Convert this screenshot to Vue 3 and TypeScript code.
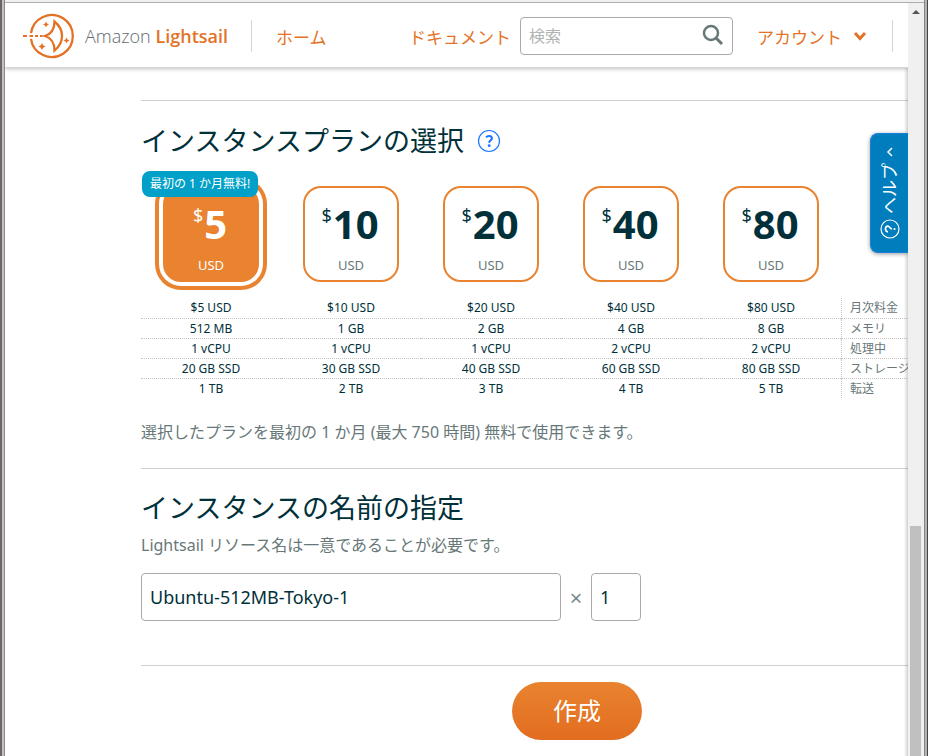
<script setup lang="ts">
import { ref } from 'vue'

interface Plan {
  price: number
  memory: string
  cpu: string
  storage: string
  transfer: string
}

const plans: Plan[] = [
  { price: 5, memory: '512 MB', cpu: '1 vCPU', storage: '20 GB SSD', transfer: '1 TB' },
  { price: 10, memory: '1 GB', cpu: '1 vCPU', storage: '30 GB SSD', transfer: '2 TB' },
  { price: 20, memory: '2 GB', cpu: '1 vCPU', storage: '40 GB SSD', transfer: '3 TB' },
  { price: 40, memory: '4 GB', cpu: '2 vCPU', storage: '60 GB SSD', transfer: '4 TB' },
  { price: 80, memory: '8 GB', cpu: '2 vCPU', storage: '80 GB SSD', transfer: '5 TB' },
]

const rows: { label: string; value: (p: Plan) => string }[] = [
  { label: '月次料金', value: (p) => `$${p.price} USD` },
  { label: 'メモリ', value: (p) => p.memory },
  { label: '処理中', value: (p) => p.cpu },
  { label: 'ストレージ', value: (p) => p.storage },
  { label: '転送', value: (p) => p.transfer },
]

const selected = ref(5)
const search = ref('')
const instanceName = ref('Ubuntu-512MB-Tokyo-1')
const count = ref('1')
</script>

<template>
  <div class="window">
    <div class="view">
      <header class="topbar">
        <a class="brand" href="#">
          <svg class="logo" viewBox="0 0 54 48" aria-hidden="true">
            <g fill="none" stroke="#e47226" stroke-width="2.3">
              <path d="M9 21.2A21 21 0 1 1 9 26.8" />
              <path d="M1 24H5M7.5 24H11M13 24H16M18 24H20.5M22 24H25" stroke-width="1.8" />
              <path d="M32.5 9.5C42.5 17.5 42.5 30.5 32.5 38.5C32.5 31 29.5 26 23 24C29.5 22 32.5 17 32.5 9.5Z" stroke-linejoin="miter" />
            </g>
            <g fill="#e47226">
              <path d="M24 9.5L25 11.5L27 12.5L25 13.5L24 15.5L23 13.5L21 12.5L23 11.5Z" />
              <path d="M20 31L21.2 33.3L23.5 34.5L21.2 35.7L20 38L18.8 35.7L16.5 34.5L18.8 33.3Z" />
              <path d="M44.5 25.5L45.5 27.5L47.5 28.5L45.5 29.5L44.5 31.5L43.5 29.5L41.5 28.5L43.5 27.5Z" />
            </g>
          </svg>
          <span class="brand-name">Amazon <b>Lightsail</b></span>
        </a>
        <span class="divider"></span>
        <nav class="nav">
          <a href="#">ホーム</a>
          <a href="#">ドキュメント</a>
        </nav>
        <label class="search">
          <input v-model="search" type="text" placeholder="検索" aria-label="検索" />
          <svg viewBox="0 0 22 22" aria-hidden="true">
            <g fill="none" stroke="#687878" stroke-width="2.5">
              <circle cx="9" cy="9" r="7" />
              <path d="M14 14L20 20" stroke-width="3" />
            </g>
          </svg>
        </label>
        <button class="account" type="button">
          アカウント
          <svg viewBox="0 0 14 10" aria-hidden="true">
            <path d="M2 2L7 7.500L12 2" fill="none" stroke="#e47226" stroke-width="2.9" />
          </svg>
        </button>
        <span class="divider end"></span>
      </header>

      <main class="content">
        <section class="section plan-section">
          <h2>
            インスタンスプランの選択
            <button class="hint" type="button" aria-label="ヘルプ">
              <svg viewBox="0 0 24 24" aria-hidden="true">
                <circle cx="12" cy="12" r="10.5" fill="none" stroke="#1a78ff" stroke-width="1.2" />
                <path d="M9 8.400C9.800 7.500 10.800 7 12 7C13.900 7 14.900 7.900 14.900 9.300C14.900 11.300 12.200 11.300 12.200 13.800" fill="none" stroke="#1a78ff" stroke-width="2.1" />
                <circle cx="12.2" cy="16.700" r="1.400" fill="#1a78ff" />
              </svg>
            </button>
          </h2>

          <div class="plans">
            <div v-for="plan in plans" :key="plan.price" class="plan-cell">
              <button
                type="button"
                class="plan"
                :class="{ active: plan.price === selected }"
                @click="selected = plan.price"
              >
                <span class="price"><span class="dollar">$</span>{{ plan.price }}</span>
                <span class="currency">USD</span>
              </button>
              <span v-if="plan.price === 5" class="badge">最初の 1 か月無料!</span>
            </div>
          </div>

          <table class="specs">
            <tbody>
              <tr v-for="row in rows" :key="row.label">
                <td v-for="plan in plans" :key="plan.price">{{ row.value(plan) }}</td>
                <th scope="row">{{ row.label }}</th>
              </tr>
            </tbody>
          </table>

          <p class="note">選択したプランを最初の 1 か月 (最大 750 時間) 無料で使用できます。</p>
        </section>

        <section class="section name-section">
          <h2>インスタンスの名前の指定</h2>
          <p class="note">Lightsail リソース名は一意であることが必要です。</p>
          <div class="name-row">
            <input v-model="instanceName" class="name" type="text" aria-label="インスタンスの名前" />
            <span class="times">×</span>
            <input v-model="count" class="count" type="text" aria-label="数" />
          </div>
        </section>

        <section class="section action">
          <button class="create" type="button">作成</button>
        </section>
      </main>

      <button class="help" type="button">
        <svg class="help-icon" viewBox="0 0 20 20" aria-hidden="true">
          <circle cx="10" cy="10" r="9" fill="none" stroke="#fff" stroke-width="1.2" />
          <path d="M7.200 8C7.200 6.300 8.300 5.500 10 5.500C11.700 5.500 12.800 6.400 12.800 7.800C12.800 9.800 10 9.800 10 12" fill="none" stroke="#fff" stroke-width="1.7" />
          <circle cx="10" cy="14.500" r="1.1" fill="#fff" />
        </svg>
        <span>ヘルプ</span>
        <svg class="help-arrow" viewBox="0 0 10 10" aria-hidden="true">
          <path d="M7 1L3 5L7 9" fill="none" stroke="#fff" stroke-width="1.5" />
        </svg>
      </button>
    </div>
    <div class="scrollbar" aria-hidden="true">
      <span class="arrow-up"></span>
      <span class="thumb"></span>
    </div>
  </div>
</template>

<style>
body {
  margin: 0;
  overflow: hidden;
}
</style>

<style scoped>
.window {
  box-sizing: border-box;
  display: flex;
  height: 100vh;
  padding: 2px 4px 0 5px;
  background: linear-gradient(to right, #6a6666 0 2px, #c4c0c0 2px 4px, #8a8686 4px 5px, #f0f0f0 5px calc(100% - 4px), #858585 calc(100% - 4px) calc(100% - 3px), #b5b5b5 calc(100% - 3px) calc(100% - 1px), #444 calc(100% - 1px));
  font-family: "Noto Sans", "Noto Sans CJK JP", sans-serif;
  color: #00303a;
}
.window * {
  box-sizing: border-box;
}
button,
input {
  font-family: inherit;
}
button {
  border: 0;
  padding: 0;
  background: none;
  cursor: pointer;
}
.view {
  position: relative;
  flex: 1;
  min-width: 0;
  overflow: hidden;
  border-top: 1px solid #adadad;
  background: #fff;
}
.view::after {
  content: "";
  position: absolute;
  top: 65px;
  right: 0;
  bottom: 0;
  width: 4px;
  background: linear-gradient(to right, transparent, rgba(0, 0, 0, 0.18));
  pointer-events: none;
}
.topbar {
  position: relative;
  display: flex;
  align-items: center;
  height: 65px;
  padding-top: 2px;
  border-bottom: 1px solid #d5d5d5;
  background: #fff;
  box-shadow: 0 1px 4px rgba(0, 0, 0, 0.25);
  color: #e47226;
}
.topbar a {
  color: inherit;
  text-decoration: none;
}
.brand {
  display: flex;
  align-items: center;
  gap: 9px;
  padding-left: 17px;
  white-space: nowrap;
}
.logo {
  width: 54px;
  height: 48px;
}
.topbar .brand-name {
  font-family: "Open Sans", sans-serif;
  font-size: 18px;
  font-weight: 300;
  color: #5f6b70;
}
.brand-name b {
  font-weight: 600;
  color: #e47226;
}
.divider {
  width: 1px;
  height: 32px;
  margin-left: 23px;
  background: #d5d5d5;
}
.nav {
  display: flex;
  flex: 1;
  justify-content: space-between;
  padding: 0 9px 0 24px;
  font-size: 17px;
  white-space: nowrap;
}
.search {
  position: relative;
  width: 213px;
}
.search input {
  display: block;
  width: 100%;
  height: 38px;
  border: 1px solid #aaa;
  border-radius: 4px;
  padding: 0 40px 0 8px;
  font-size: 16px;
  background: #fff;
}
.search input::placeholder {
  color: #b0b4b4;
}
.search svg {
  position: absolute;
  top: 7px;
  right: 9px;
  width: 22px;
  height: 22px;
}
.account {
  display: flex;
  align-items: center;
  gap: 11px;
  margin-left: 24px;
  font-size: 17px;
  color: inherit;
}
.account svg {
  width: 14px;
  height: 10px;
}
.divider.end {
  margin: 0 15px 0 25px;
}
.content {
  padding: 32px 0 0 136px;
}
.section {
  min-width: 872px;
  border-top: 1px solid #d0d0d0;
}
h2 {
  display: flex;
  align-items: center;
  gap: 13px;
  margin: 0;
  font-size: 27px;
  font-weight: 400;
  line-height: 40px;
}
.plan-section {
  padding: 20px 0 24px;
}
.hint,
.hint svg {
  display: block;
  width: 24px;
  height: 24px;
}
.plans {
  display: grid;
  grid-template-columns: repeat(5, 140px);
  padding-top: 25px;
}
.plan-cell {
  position: relative;
  display: flex;
  justify-content: center;
}
.plan {
  display: flex;
  flex-direction: column;
  align-items: center;
  width: 96px;
  height: 96px;
  padding-top: 12px;
  border: 2px solid #e9832f;
  border-radius: 18px;
  color: #00303a;
}
.price {
  display: flex;
  gap: 1px;
  padding-right: 2px;
  font-size: 40px;
  font-weight: 700;
  line-height: 48px;
}
.dollar {
  font-size: 18px;
  font-weight: 400;
  line-height: 30px;
}
.currency {
  font-size: 13px;
  line-height: 34px;
  color: #687878;
}
.plan.active,
.plan.active .currency {
  color: #fff;
}
.plan.active {
  background: #e9832f;
  box-shadow: 0 0 0 4px #fff, 0 0 0 8px #e9832f;
}
.badge {
  position: absolute;
  top: -15px;
  left: 1px;
  padding: 0 8px;
  border-radius: 8px;
  background: #00a0c8;
  color: #fff;
  font-size: 12px;
  line-height: 26px;
  white-space: nowrap;
}
.specs {
  width: 850px;
  margin-top: 16px;
  border-collapse: separate;
  border-spacing: 0;
  table-layout: fixed;
  font-size: 12px;
  line-height: 19px;
}
.specs td,
.specs th {
  height: 20px;
  padding: 0;
  border-bottom: 1px dotted #c4c4c4;
}
.specs tr:last-child > * {
  height: 19px;
  border-bottom: 0;
}
.specs tr:first-child > * {
  height: 21px;
  vertical-align: top;
}
.specs td {
  width: 140px;
  text-align: center;
}
.specs th {
  padding-left: 8px;
  border-left: 1px dotted #c4c4c4;
  color: #687878;
  font-weight: 400;
  text-align: left;
}
.note {
  margin: 0;
  font-size: 16px;
  line-height: 24px;
  color: #687878;
}
.plan-section .note {
  margin-top: 22px;
}
.name-section {
  padding: 19px 0 44px;
}
.name-section .note {
  margin-top: 5px;
}
.name-row {
  display: flex;
  align-items: center;
  margin-top: 16px;
}
.name-row input {
  height: 48px;
  border: 1px solid #aaa;
  border-radius: 4px;
  padding: 0 8px;
  font-size: 18px;
  color: #00303a;
}
.name {
  width: 420px;
}
.count {
  width: 50px;
}
.times {
  width: 30px;
  text-align: center;
  font-size: 22px;
  line-height: 24px;
  color: #788a8e;
}
.action {
  display: flex;
  justify-content: center;
  padding: 16px 0 32px;
}
.create {
  width: 130px;
  height: 58px;
  padding-bottom: 3px;
  border-radius: 29px;
  background: linear-gradient(#e9832f, #e26d20);
  color: #fff;
  font-size: 24px;
}
.help {
  position: absolute;
  z-index: 1;
  top: 130px;
  right: 0;
  display: flex;
  align-items: center;
  justify-content: space-between;
  width: 38px;
  height: 120px;
  padding: 13px 8px;
  border: 1px solid #1a80e0;
  border-right: 0;
  border-radius: 8px 0 0 8px;
  background: #007dbc;
  box-shadow: 0 1px 4px rgba(0, 0, 0, 0.4);
  color: #fff;
  font-size: 17px;
  line-height: 20px;
  white-space: nowrap;
  writing-mode: sideways-lr;
}
.help-icon,
.help-arrow {
  flex: none;
}
.help-icon {
  width: 20px;
  height: 20px;
  transform: rotate(-90deg);
}
.help-arrow {
  width: 10px;
  height: 10px;
}
.scrollbar {
  display: flex;
  flex-direction: column;
  justify-content: space-between;
  align-items: flex-start;
  width: 16px;
  padding-left: 2px;
  border-top: 1px solid #adadad;
  background: #f0f0f0;
}
.arrow-up {
  margin: 7px 0 0 2px;
  border: 4px solid transparent;
  border-top: 0;
  border-bottom-color: #555;
}
.thumb {
  width: 11px;
  height: 230px;
  background: #c0c0c0;
}
</style>
